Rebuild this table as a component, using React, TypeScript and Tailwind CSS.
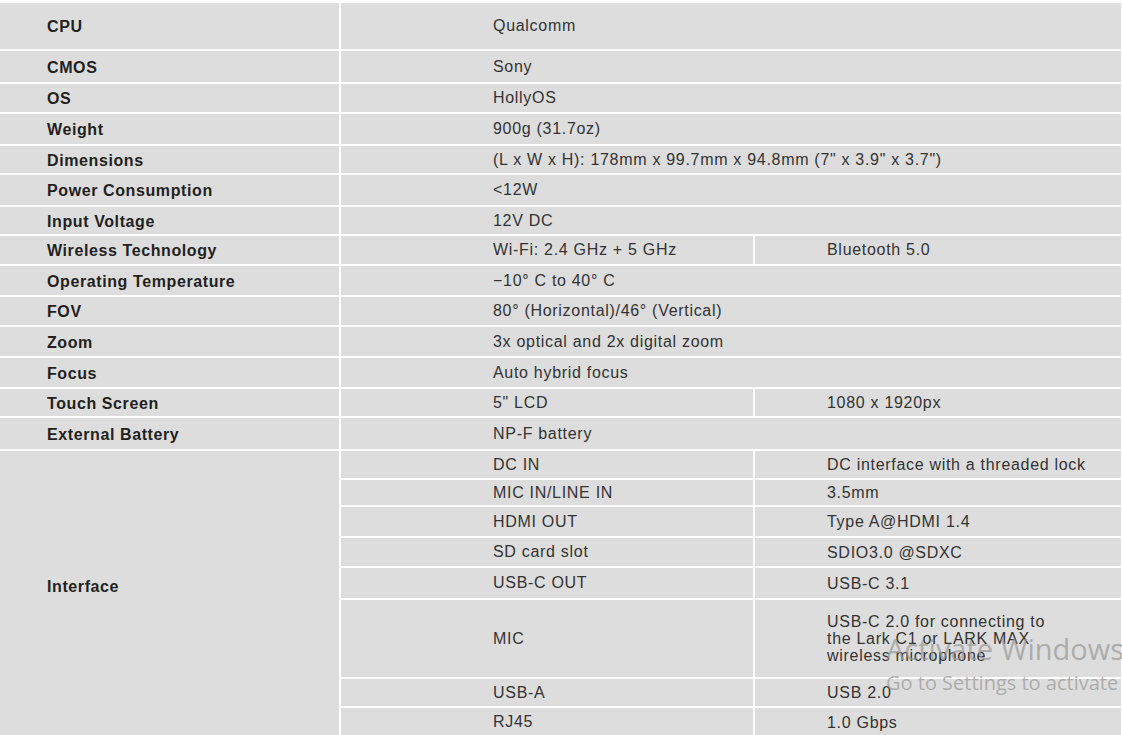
const label = "font-['Liberation_Sans',Arial,sans-serif] text-[16px] font-bold tracking-[0.6px] text-[#231f20]";
const value = "font-['Liberation_Sans',Arial,sans-serif] text-[16px] tracking-[0.7px] text-[#333]";

type Row = { label: string; h: string; values: string[] };

const rows: Row[] = [
  { label: 'CPU', h: 'h-[46px]', values: ['Qualcomm'] },
  { label: 'CMOS', h: 'h-[31px]', values: ['Sony'] },
  { label: 'OS', h: 'h-[28px]', values: ['HollyOS'] },
  { label: 'Weight', h: 'h-[30px]', values: ['900g (31.7oz)'] },
  { label: 'Dimensions', h: 'h-[27px]', values: ['(L x W x H): 178mm x 99.7mm x 94.8mm (7" x 3.9" x 3.7")'] },
  { label: 'Power Consumption', h: 'h-[30px]', values: ['<12W'] },
  { label: 'Input Voltage', h: 'h-[27px]', values: ['12V DC'] },
  { label: 'Wireless Technology', h: 'h-[28px]', values: ['Wi-Fi: 2.4 GHz + 5 GHz', 'Bluetooth 5.0'] },
  { label: 'Operating Temperature', h: 'h-[29px]', values: ['−10° C to 40° C'] },
  { label: 'FOV', h: 'h-[28px]', values: ['80° (Horizontal)/46° (Vertical)'] },
  { label: 'Zoom', h: 'h-[29px]', values: ['3x optical and 2x digital zoom'] },
  { label: 'Focus', h: 'h-[29px]', values: ['Auto hybrid focus'] },
  { label: 'Touch Screen', h: 'h-[27px]', values: ['5" LCD', '1080 x 1920px'] },
  { label: 'External Battery', h: 'h-[31px]', values: ['NP-F battery'] },
];

const ports: Row[] = [
  { label: 'DC IN', h: 'h-[27px]', values: ['DC interface with a threaded lock'] },
  { label: 'MIC IN/LINE IN', h: 'h-[25px]', values: ['3.5mm'] },
  { label: 'HDMI OUT', h: 'h-[29px]', values: ['Type A@HDMI 1.4'] },
  { label: 'SD card slot', h: 'h-[28px]', values: ['SDIO3.0 @SDXC'] },
  { label: 'USB-C OUT', h: 'h-[30px]', values: ['USB-C 3.1'] },
  { label: 'MIC', h: 'h-[77px]', values: ['USB-C 2.0 for connecting to', 'the Lark C1 or LARK MAX', 'wireless microphone'] },
  { label: 'USB-A', h: 'h-[27px]', values: ['USB 2.0'] },
  { label: 'RJ45', h: 'h-[28px]', values: ['1.0 Gbps'] },
];

function ValueCells({ values }: { values: string[] }) {
  if (values.length === 1) {
    return (
      <div className={`flex flex-1 items-center bg-[#dddddd] pl-[152px] ${value}`}>{values[0]}</div>
    );
  }
  return (
    <>
      <div className={`flex w-[412px] items-center bg-[#dddddd] pl-[152px] ${value}`}>{values[0]}</div>
      <div className={`flex flex-1 items-center bg-[#dddddd] pl-[72px] ${value}`}>{values[1]}</div>
    </>
  );
}

export default function App() {
  return (
    <div className="relative h-[735px] w-[1122px] overflow-hidden bg-white pt-[3px] pr-px">
      <div className="flex flex-col gap-[2px]">
        {rows.map((r) => (
          <div key={r.label} className={`flex gap-[2px] ${r.h}`}>
            <div className={`flex w-[339px] items-center bg-[#dddddd] pt-[2px] pl-[47px] ${label}`}>{r.label}</div>
            <ValueCells values={r.values} />
          </div>
        ))}
        <div className="flex gap-[2px]">
          <div className={`flex w-[339px] items-center bg-[#dddddd] pb-[14px] pl-[47px] ${label}`}>Interface</div>
          <div className="flex flex-1 flex-col gap-[2px]">
            {ports.map((p) => (
              <div key={p.label} className={`flex gap-[2px] ${p.h}`}>
                <div className={`flex w-[412px] items-center bg-[#dddddd] pl-[152px] ${value}`}>{p.label}</div>
                <div className={`flex flex-1 flex-col justify-center whitespace-nowrap bg-[#dddddd] pl-[72px] leading-[17px] ${value}`}>
                  {p.values.map((v) => (
                    <span key={v}>{v}</span>
                  ))}
                </div>
              </div>
            ))}
          </div>
        </div>
      </div>

      {/* OS activation watermark lying over the table */}
      <div className="pointer-events-none absolute left-[886px] top-[630px] whitespace-nowrap font-['Open_Sans',sans-serif] text-[rgba(150,150,150,0.7)]">
        <div className="text-[29px] leading-[38px]">Activate Windows</div>
        <div className="text-[20px] leading-[30px]">Go to Settings to activate Windows.</div>
      </div>
    </div>
  );
}
